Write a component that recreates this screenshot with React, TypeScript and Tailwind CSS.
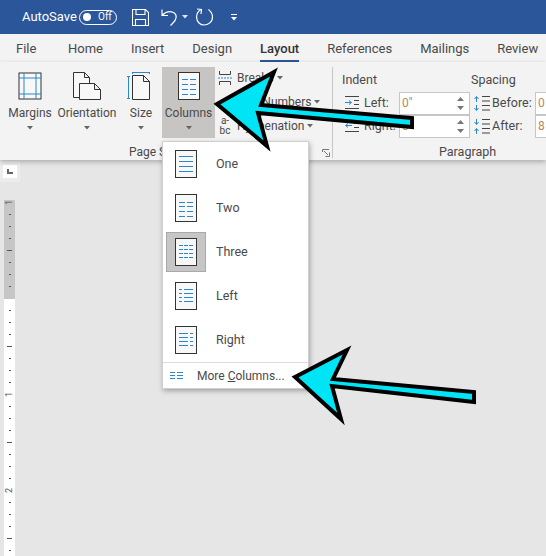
const font = { fontFamily: 'Roboto, "Open Sans", sans-serif' };

const BLUE = '#2a87cc';

function Caret({ className = '' }: { className?: string }) {
  return (
    <svg width="6" height="4" viewBox="0 0 6 4" className={className}>
      <path d="M0 0h6L3 3.5z" fill="#666" />
    </svg>
  );
}

// page with blue column lines, same drawing for the button and the menu
function ColumnsIcon({ cols, rows }: { cols: number[][]; rows: number[] }) {
  return (
    <svg width="22" height="28" viewBox="0 0 22 28">
      <rect x="0.5" y="0.5" width="21" height="27" fill="#f8f8f8" stroke="#333" />
      {cols.map((c, i) =>
        rows.map((y) => <path key={i + '-' + y} d={`M${c[0]} ${y}H${c[1]}`} stroke={BLUE} strokeWidth="1" />)
      )}
    </svg>
  );
}

const menu = [
  { label: 'One', cols: [[4, 18]], rows: [6.5, 11.5, 16.5, 21.5] },
  { label: 'Two', cols: [[4, 10], [12, 18]], rows: [8.5, 12.5, 17.5, 22.5] },
  { label: 'Three', cols: [[4, 8], [9, 13], [14, 18]], rows: [7.5, 11.5, 15.5, 19.5] },
  { label: 'Left', cols: [[4, 7], [9, 18]], rows: [7.5, 11.5, 15.5, 19.5] },
  { label: 'Right', cols: [[4, 13], [15, 18]], rows: [7.5, 11.5, 15.5, 19.5] },
];

const tabs = ['File', 'Home', 'Insert', 'Design', 'Layout', 'References', 'Mailings', 'Review'];

function RibbonButton({ label, width, icon }: { label: string; width: string; icon: React.ReactNode }) {
  return (
    <div className={`flex flex-col items-center pt-[5px] ${width}`}>
      <div className="h-[28px] flex items-center">{icon}</div>
      <span className="mt-[5px] text-[12px] leading-[16px] whitespace-nowrap">{label}</span>
      <Caret className="mt-[5px]" />
    </div>
  );
}

function SpinInput({ value }: { value: string }) {
  return (
    <div className="w-[71px] h-[23px] shrink-0 bg-white border border-[#c6c6c6] flex items-center justify-between pl-[2px] pr-[5px]">
      <span className="text-[12px] text-[#b58a5c]">{value}</span>
      <div className="flex flex-col gap-[5px]">
        <svg width="7" height="4" viewBox="0 0 7 4"><path d="M0 4L3.5 0 7 4z" fill="#777" /></svg>
        <svg width="7" height="4" viewBox="0 0 7 4"><path d="M0 0L3.5 4 7 0z" fill="#777" /></svg>
      </div>
    </div>
  );
}

function LinesIcon({ dir }: { dir: 'left' | 'right' }) {
  return (
    <svg width="15" height="14" viewBox="0 0 15 14">
      <path d="M0 .5h14M9 4.500h5M9 8.500h5M0 12.500h14" stroke="#444" fill="none" />
      {dir === 'left' ? (
        <path d="M0 6.500h6M4 4.500l2.500 2-2.500 2" stroke={BLUE} fill="none" />
      ) : (
        <path d="M7 6.500H1M3 4.500l-2.500 2 2.500 2" stroke={BLUE} fill="none" />
      )}
    </svg>
  );
}

function SpacingIcon({ down }: { down?: boolean }) {
  return (
    <svg width="17" height="15" viewBox="0 0 17 15">
      <path d="M9 .5h8M9 5h8M9 9.500h8M9 14h8" stroke="#444" fill="none" />
      {down ? (
        <path d="M3.500 0v5M1.500 3l2 2.500 2-2.500M3.500 15v-5M1.500 12l2-2.500 2 2.500" stroke={BLUE} fill="none" />
      ) : (
        <path d="M3.500 6V1M1.500 3l2-2.500 2 2.500M3.500 9v5M1.500 12l2 2.500 2-2.500" stroke={BLUE} fill="none" />
      )}
    </svg>
  );
}

export default function App() {
  const ticks = Array.from({ length: 31 }, (_, i) => i);

  return (
    <div style={font} className="relative w-[546px] h-[556px] overflow-hidden bg-[#e6e6e6] text-[#4a4a4a]">
      {/* title bar */}
      <div className="h-[34px] bg-[#2b579a] flex items-center text-white pl-[22px]">
        <span className="text-[13px] w-[57px] whitespace-nowrap">AutoSave</span>
        <div className="w-[38px] h-[15px] rounded-full border border-white flex items-center pl-[3px]">
          <div className="w-[8px] h-[8px] rounded-full bg-white" />
          <span className="ml-[7px] text-[10px] leading-none">Off</span>
        </div>
        <svg className="ml-[15px]" width="17" height="17" viewBox="0 0 17 17" fill="none" stroke="#fff" strokeWidth="1.1">
          <path d="M.5.5h13l3 3v13H.5zM4 .5v5h9v-5M3.500 16.500v-6h10v6" />
        </svg>
        <svg className="ml-[12px]" width="18" height="18" viewBox="0 0 18 18" fill="none" stroke="#fff" strokeWidth="1.2">
          <path d="M1 1.500v6h6M1.500 7C5 3.500 9 3 12.500 4.500c4 2 3.500 7-1 11l-2 2" />
        </svg>
        <svg className="ml-[3px]" width="6" height="4" viewBox="0 0 6 4"><path d="M0 0h6L3 3.500z" fill="#dfe6f2" /></svg>
        <svg className="ml-[8px]" width="17" height="18" viewBox="0 0 17 18" fill="none" stroke="#fff" strokeWidth="1.2">
          <path d="M5 1.500C1.500 3.500.5 6.500.6 9.500c.2 4.500 3.500 7.500 7.900 7.500s8-3.500 8-8c0-3-1.500-5.500-4-7.500M1 1l4.500.5L5 6" />
        </svg>
        <svg className="ml-[18px]" width="6" height="7" viewBox="0 0 6 7" fill="#fff">
          <path d="M0 0h6v1H0zM0 3h6L3 6.500z" />
        </svg>
      </div>

      {/* tabs */}
      <div className="h-[28px] bg-[#f3f3f3] flex items-start pl-[16px] gap-[28px] pt-[6px] whitespace-nowrap">
        {tabs.map((t) =>
          t === 'Layout' ? (
            <div key={t} className="relative text-[13px] leading-[18px] font-medium text-[#333]">
              {t}
              <div className="absolute left-0 right-0 top-[20px] h-[2px] bg-[#2b579a]" />
            </div>
          ) : (
            <div key={t} className={t === 'File' ? 'text-[13px] leading-[18px] w-[24px]' : 'text-[13px] leading-[18px]'}>{t}</div>
          )
        )}
      </div>

      {/* ribbon */}
      <div className="h-[98px] bg-[#f3f3f3] flex shadow-[0_2px_5px_rgba(0,0,0,0.25)] relative">
        <div className="w-[333px] shrink-0 border-r border-[#c6c6c6] mt-[5px] mb-[2px] flex flex-col relative">
          <div className="flex h-[73px] pl-[3px]">
            <RibbonButton
              label="Margins"
              width="w-[54px]"
              icon={
                <svg width="24" height="28" viewBox="0 0 24 28" fill="none">
                  <rect x="1" y="1" width="22" height="26" fill="#f8f8f8" stroke="#333" />
                  <path d="M6 1v26M18 1v26M1 6h22M1 22h22" stroke={BLUE} />
                </svg>
              }
            />
            <RibbonButton
              label="Orientation"
              width="w-[60px]"
              icon={
                <svg width="28" height="28" viewBox="0 0 28 28" fill="none" stroke="#333">
                  <path d="M6.500 25.500H.5V.5h11l5 5v6M11.500.5v5h5" fill="#f8f8f8" />
                  <path d="M6.500 11.500h15l6 6v10h-21zM21.500 11.500v6h6" fill="#f8f8f8" />
                </svg>
              }
            />
            <RibbonButton
              label="Size"
              width="w-[48px]"
              icon={
                <svg className="-ml-[5px]" width="23" height="28" viewBox="0 0 23 28" fill="none">
                  <path d="M5.500 27.500V3.500h11l6 6v18zM16.500 3.500v6h6" fill="#f8f8f8" stroke="#333" />
                  <path d="M5 .5h18M5.500 0v2M22.500 0v2M1.500 4v23M0 4.500h3M0 26.500h3" stroke={BLUE} />
                </svg>
              }
            />
            <div className="bg-[#c6c5c3] ml-[-3px]">
              <RibbonButton
                label="Columns"
                width="w-[53px]"
                icon={<ColumnsIcon cols={[[4, 10], [12, 18]]} rows={[7.5, 12.5, 17.5, 22.5]} />}
              />
            </div>
            <div className="flex flex-col ml-[3px] -mt-[1px] text-[12px] whitespace-nowrap">
              <div className="h-[24px] flex items-center gap-[5px]">
                <svg width="14" height="14" viewBox="0 0 14 14" fill="none">
                  <path d="M1.500 0v3.500h11V0M1.500 14v-3.500h11V14" stroke="#444" />
                  <path d="M0 7h14" stroke={BLUE} strokeDasharray="2 1" />
                </svg>
                <span className="flex items-center gap-[3px]">Breaks <Caret /></span>
              </div>
              <div className="h-[24px] flex items-center gap-[5px]">
                <span className="w-[14px] text-[10px] text-center text-[#2a87cc]">1</span>
                <span className="flex items-center gap-[3px]">Line Numbers <Caret /></span>
              </div>
              <div className="h-[24px] flex items-center gap-[5px]">
                <span className="w-[14px] text-[10px] leading-[10px] text-center">a-<br />bc</span>
                <span className="flex items-center gap-[3px]">Hyphenation <Caret /></span>
              </div>
            </div>
          </div>
          <div className="flex-1 flex items-start pt-[6px] pl-[129px] text-[12px] leading-[16px]">
            <span>Page Setup</span>
          </div>
          <svg className="absolute right-[2px] bottom-[1px]" width="8" height="8" viewBox="0 0 8 8" fill="none" stroke="#777">
            <path d="M7.500 3.500v4h-4M.5 3V.5H7M2 2l4 4" />
          </svg>
        </div>

        <div className="flex-1 min-w-0 flex flex-col pl-[9px] pt-[9px] text-[12.5px] whitespace-nowrap">
          <div className="flex leading-[18px] h-[21px]">
            <span className="w-[129px]">Indent</span>
            <span>Spacing</span>
          </div>
          <div className="flex items-center h-[24px]">
            <div className="w-[57px] shrink-0 pl-[3px] flex items-center gap-[4px]">
              <LinesIcon dir="left" /> Left:
            </div>
            <SpinInput value={'0"'} />
            <div className="w-[65px] shrink-0 pl-[3px] flex items-center gap-[2px]">
              <SpacingIcon /> Before:
            </div>
            <SpinInput value="0" />
          </div>
          <div className="flex items-center h-[24px]">
            <div className="w-[57px] shrink-0 pl-[3px] flex items-center gap-[4px]">
              <LinesIcon dir="right" /> Right:
            </div>
            <SpinInput value={'0"'} />
            <div className="w-[65px] shrink-0 pl-[3px] flex items-center gap-[2px]">
              <SpacingIcon down /> After:
            </div>
            <SpinInput value="8" />
          </div>
          <div className="pl-[97px] pt-[6px] leading-[16px]">Paragraph</div>
        </div>
      </div>

      {/* tab selector and vertical ruler */}
      <div className="w-[20px]">
        <div className="mt-[1px] w-[20px] h-[21px] bg-[#ececec] flex items-center justify-center">
          <div className="w-[14px] h-[13px] bg-white flex items-center justify-center">
            <div className="w-[6px] h-[5px] border-l-2 border-b-2 border-[#666]" />
          </div>
        </div>
        <div className="mt-[18px] ml-[4px] w-[11px] relative bg-white overflow-hidden">
          <div className="absolute left-0 top-0 w-full h-[99px] bg-[#c6c6c6]" />
          <div className="-mt-[4px]">
            {ticks.map((i) => {
              const label = i === 0 ? '1' : i === 16 ? '1' : i === 24 ? '2' : null;
              const long = i % 4 === 0 && !label;
              return (
                <div key={i} className="relative h-[12px] flex items-center justify-center">
                  {label ? (
                    <span className="text-[9px] leading-none -rotate-90 text-[#555]">{label}</span>
                  ) : i !== 8 ? (
                    <div className={long ? 'w-[5px] h-px bg-[#555]' : 'w-[2px] h-px bg-[#555]'} />
                  ) : null}
                </div>
              );
            })}
          </div>
        </div>
      </div>

      {/* columns dropdown */}
      <div className="absolute left-[162px] top-[141px] w-[147px] h-[248px] bg-white border border-[#d0d0d0] shadow-[1px_2px_5px_rgba(0,0,0,0.3)] flex flex-col">
        <div>
          {menu.map((m) => (
            <div key={m.label} className="h-[44px] flex items-center text-[12.5px]">
              <div
                className={
                  m.label === 'Three'
                    ? 'ml-[3px] w-[40px] h-[40px] flex items-center justify-center bg-[#c6c6c6] border border-[#a9a9a9]'
                    : 'ml-[3px] w-[40px] h-[40px] flex items-center justify-center'
                }
              >
                <ColumnsIcon cols={m.cols} rows={m.rows} />
              </div>
              <span className="ml-[10px]">{m.label}</span>
            </div>
          ))}
        </div>
        <div className="border-t border-[#dcdcdc] flex-1 flex items-center pl-[7px] text-[12px]">
          <svg width="13" height="7" viewBox="0 0 13 7" stroke={BLUE} fill="none">
            <path d="M0 .5h5M7 .5h6M0 3.500h5M7 3.500h6M0 6.500h5M7 6.500h6" />
          </svg>
          <span className="ml-[14px] whitespace-nowrap">More <span className="underline">C</span>olumns...</span>
        </div>
      </div>

      {/* callout arrows on top of the screenshot */}
      <svg className="absolute left-0 top-0" width="546" height="556" viewBox="0 0 546 556" fill="#00e5f5" stroke="#000" strokeWidth="4" strokeLinejoin="miter" strokeMiterlimit="6">
        <path d="M217 104L274 72 261 105 412 118 412 127 258 113 267 146z" />
        <path d="M295 377L347 350 333 379 474 392 474 402 332 386 341 419z" />
      </svg>
    </div>
  );
}
